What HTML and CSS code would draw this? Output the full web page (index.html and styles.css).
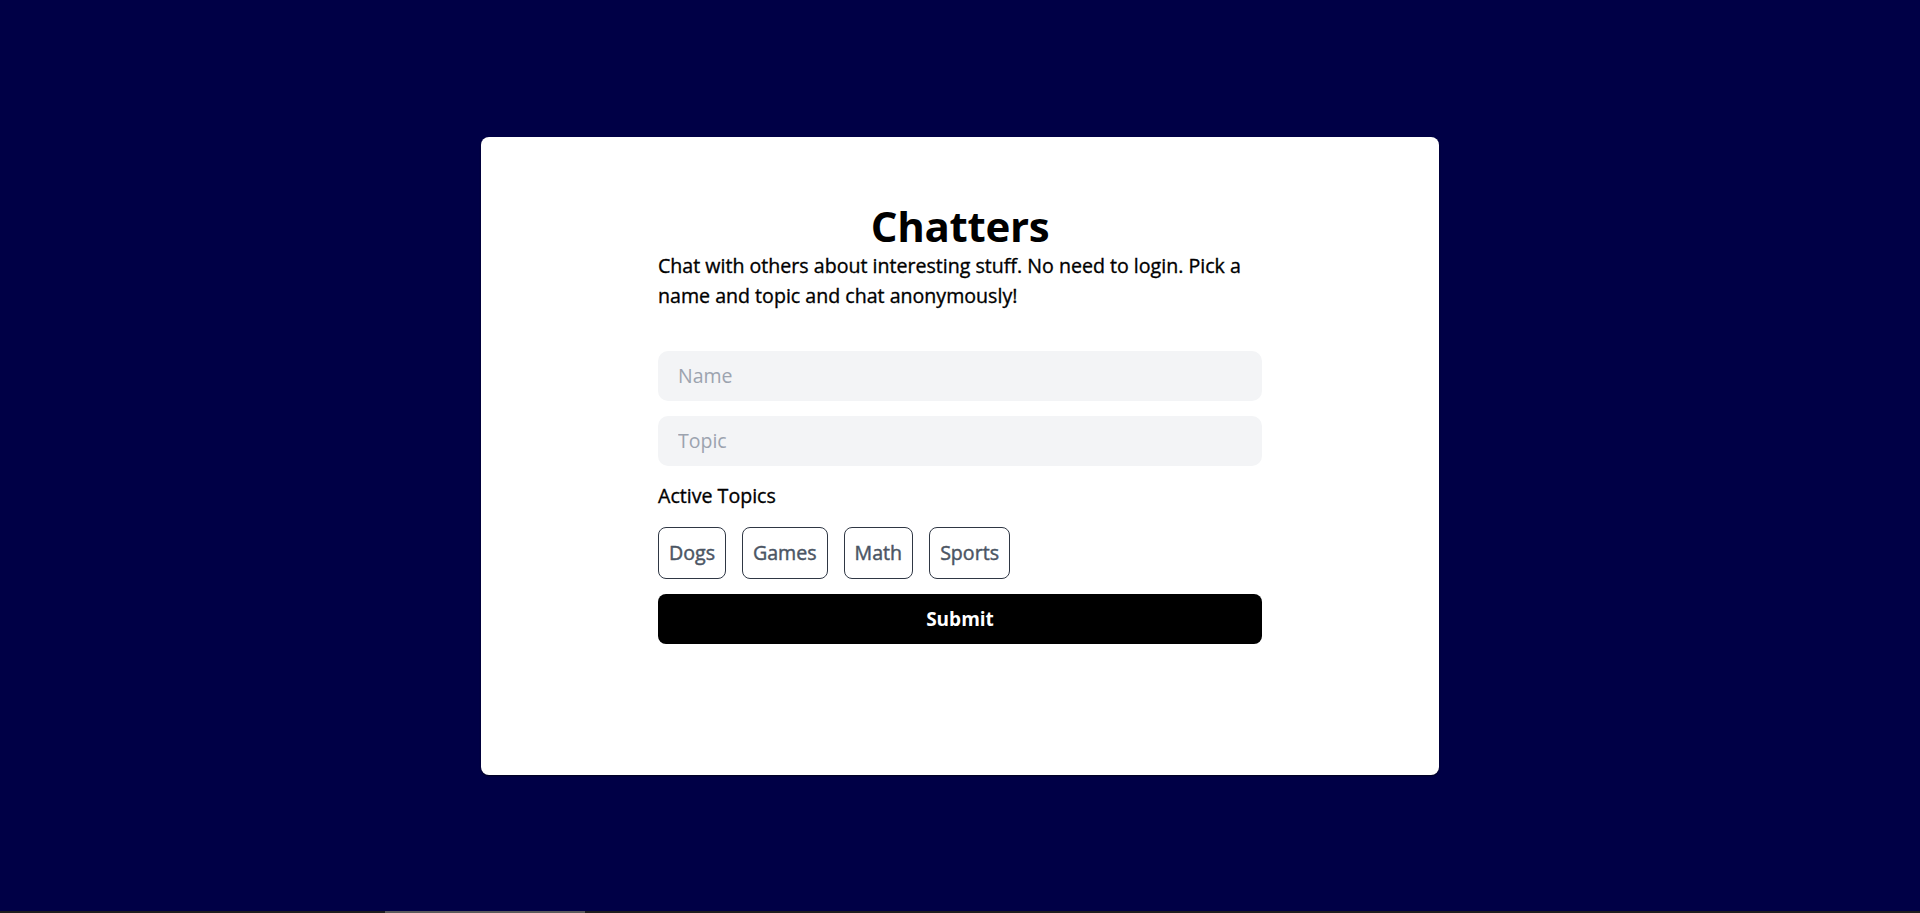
FILE: index.html
```html
<!DOCTYPE html>
<html lang="en">
<head>
<meta charset="utf-8">
<title>Chatters</title>
<link rel="stylesheet" href="styles.css">
</head>
<body>
<main class="page">
  <section class="card">
    <div class="content">
      <h1 class="title">Chatters</h1>
      <p class="intro">Chat with others about interesting stuff. No need to login. Pick a name and topic and chat anonymously!</p>
      <form class="form">
        <input class="field" type="text" placeholder="Name">
        <input class="field" type="text" placeholder="Topic">
        <div class="label">Active Topics</div>
        <div class="chips">
          <button type="button" class="chip">Dogs</button>
          <button type="button" class="chip">Games</button>
          <button type="button" class="chip">Math</button>
          <button type="button" class="chip">Sports</button>
        </div>
        <button type="button" class="submit">Submit</button>
      </form>
    </div>
  </section>
</main>
<div class="hscroll"><div class="hscroll-thumb"></div></div>
</body>
</html>
```

FILE: styles.css
```css
* { box-sizing: border-box; }
html, body { margin: 0; padding: 0; }
body {
  background: #000046;
  font-family: "Segoe UI", "Open Sans", "Noto Sans", sans-serif;
  color: #000;
  overflow: hidden;
}
.page {
  height: 913px;
  display: flex;
  align-items: center;
  justify-content: center;
  padding-bottom: 2px;
}
.card {
  width: 958px;
  height: 638px;
  background: #fff;
  border-radius: 8px;
  box-shadow: 0 1px 2px rgba(0,0,0,0.6);
  padding-top: 64px;
  display: flex;
  justify-content: center;
}
.content {
  width: 604px;
  display: flex;
  flex-direction: column;
}
.title {
  margin: 0;
  font-size: 42px;
  line-height: 50px;
  font-weight: 700;
  text-align: center;
  letter-spacing: -0.3px;
}
.intro {
  margin: 0 0 40px;
  font-size: 19.6px;
  line-height: 30px;
  font-weight: 400;
  -webkit-text-stroke: 0.35px currentColor;
}
.form {
  display: flex;
  flex-direction: column;
  gap: 15px;
}
.field {
  height: 50px;
  border: none;
  border-radius: 10px;
  background: #f3f4f6;
  padding: 0 20px;
  font-family: inherit;
  font-size: 19.5px;
  color: #111;
  outline: none;
}
.field::placeholder { color: #9ca3af; }
.label {
  margin-top: 1px;
  margin-bottom: 2px;
  font-size: 19.6px;
  line-height: 28px;
  font-weight: 400;
  -webkit-text-stroke: 0.35px currentColor;
}
.chips {
  display: flex;
  gap: 16px;
}
.chip {
  height: 52px;
  padding: 0 10px;
  border: 1px solid #2f3744;
  border-radius: 8px;
  background: #fff;
  color: #4b5563;
  font-family: inherit;
  font-size: 19.6px;
  font-weight: 400;
  -webkit-text-stroke: 0.45px currentColor;
}
.submit {
  height: 50px;
  border: none;
  border-radius: 8px;
  background: #000;
  color: #fff;
  font-family: inherit;
  font-size: 19px;
  font-weight: 700;
}
.hscroll {
  position: fixed;
  left: 0;
  right: 0;
  bottom: 0;
  height: 2px;
  background: #1e1e1e;
}
.hscroll-thumb {
  position: absolute;
  left: 385px;
  width: 200px;
  top: 0;
  bottom: 0;
  background: #5a5a5a;
}
```
